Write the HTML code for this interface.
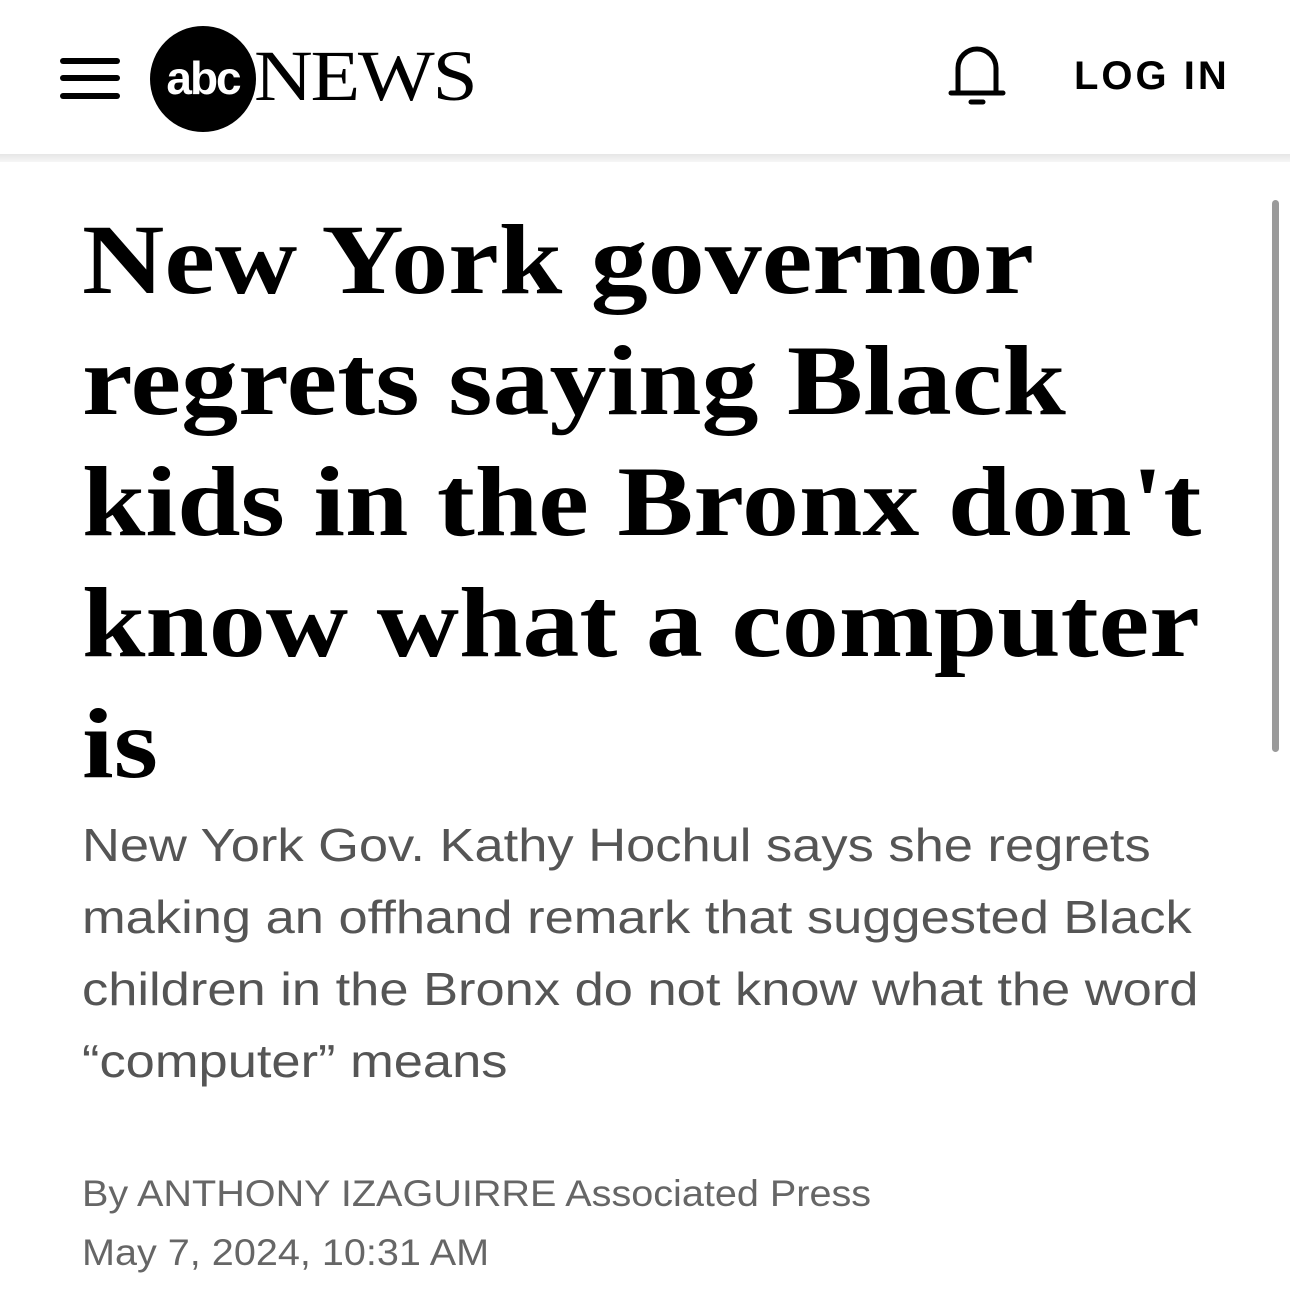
<!DOCTYPE html>
<html><head><meta charset="utf-8"><style>
html,body{margin:0;padding:0;background:#fff;width:1290px;height:1312px;overflow:hidden;position:relative}
.hdr{position:absolute;left:0;top:0;width:1290px;height:156px;background:#fff}
.shadow{position:absolute;left:0;top:154px;width:1290px;height:8px;background:linear-gradient(#e6e6e6,#f6f6f6);}
.bar{position:absolute;left:60px;width:60px;height:6px;border-radius:3px;background:#000}
.circle{position:absolute;left:150px;top:26px;width:106px;height:106px;border-radius:50%;background:#000;color:#fff;font:bold 46px "Liberation Sans",sans-serif;text-align:center;line-height:104px;letter-spacing:-2px}
.news{position:absolute;left:254px;top:36px;font:72px "Liberation Serif",serif;color:#000;letter-spacing:-2px;line-height:80px;transform:scaleX(1.13);transform-origin:left}
.login{position:absolute;left:1074px;top:54px;font:bold 40px "Liberation Sans",sans-serif;letter-spacing:3px;line-height:44px}
.l{position:absolute;left:82px;white-space:nowrap;transform-origin:left top}
.h{font:bold 100px "Liberation Serif",serif;color:#000;transform:scaleX(1.14);line-height:100px}
.s{font:46px "Liberation Sans",sans-serif;color:#555;transform:scaleX(1.14);line-height:50px}
.b{font:37px "Liberation Sans",sans-serif;color:#666;transform:scaleX(1.07);line-height:40px}
.scroll{position:absolute;left:1272px;top:200px;width:7px;height:552px;border-radius:4px;background:#9a9a9a}
</style></head><body>
<div class="hdr">
<div class="bar" style="top:58px"></div><div class="bar" style="top:75px"></div><div class="bar" style="top:93px"></div>
<div class="circle">abc</div>
<div class="news">NEWS</div>
<svg style="position:absolute;left:946px;top:44px" width="62" height="62" viewBox="0 0 62 62"><path d="M12 48 V24 A19 19 0 0 1 50 24 V48" fill="none" stroke="#000" stroke-width="5"/><line x1="5" y1="49" x2="57" y2="49" stroke="#000" stroke-width="5" stroke-linecap="round"/><line x1="25" y1="58" x2="37" y2="58" stroke="#000" stroke-width="5" stroke-linecap="round"/></svg>
<div class="login">LOG IN</div>
</div>
<div class="shadow"></div>
<div class="scroll"></div>
<div class="l h" style="top:210px">New York governor</div>
<div class="l h" style="top:331px">regrets saying Black</div>
<div class="l h" style="top:452px">kids in the Bronx don't</div>
<div class="l h" style="top:573px">know what a computer</div>
<div class="l h" style="top:694px">is</div>
<div class="l s" style="top:820px">New York Gov. Kathy Hochul says she regrets</div>
<div class="l s" style="top:892px">making an offhand remark that suggested Black</div>
<div class="l s" style="top:964px">children in the Bronx do not know what the word</div>
<div class="l s" style="top:1036px">“computer” means</div>
<div class="l b" style="top:1174px">By ANTHONY IZAGUIRRE Associated Press</div>
<div class="l b" style="top:1233px">May 7, 2024, 10:31 AM</div>
</body></html>
